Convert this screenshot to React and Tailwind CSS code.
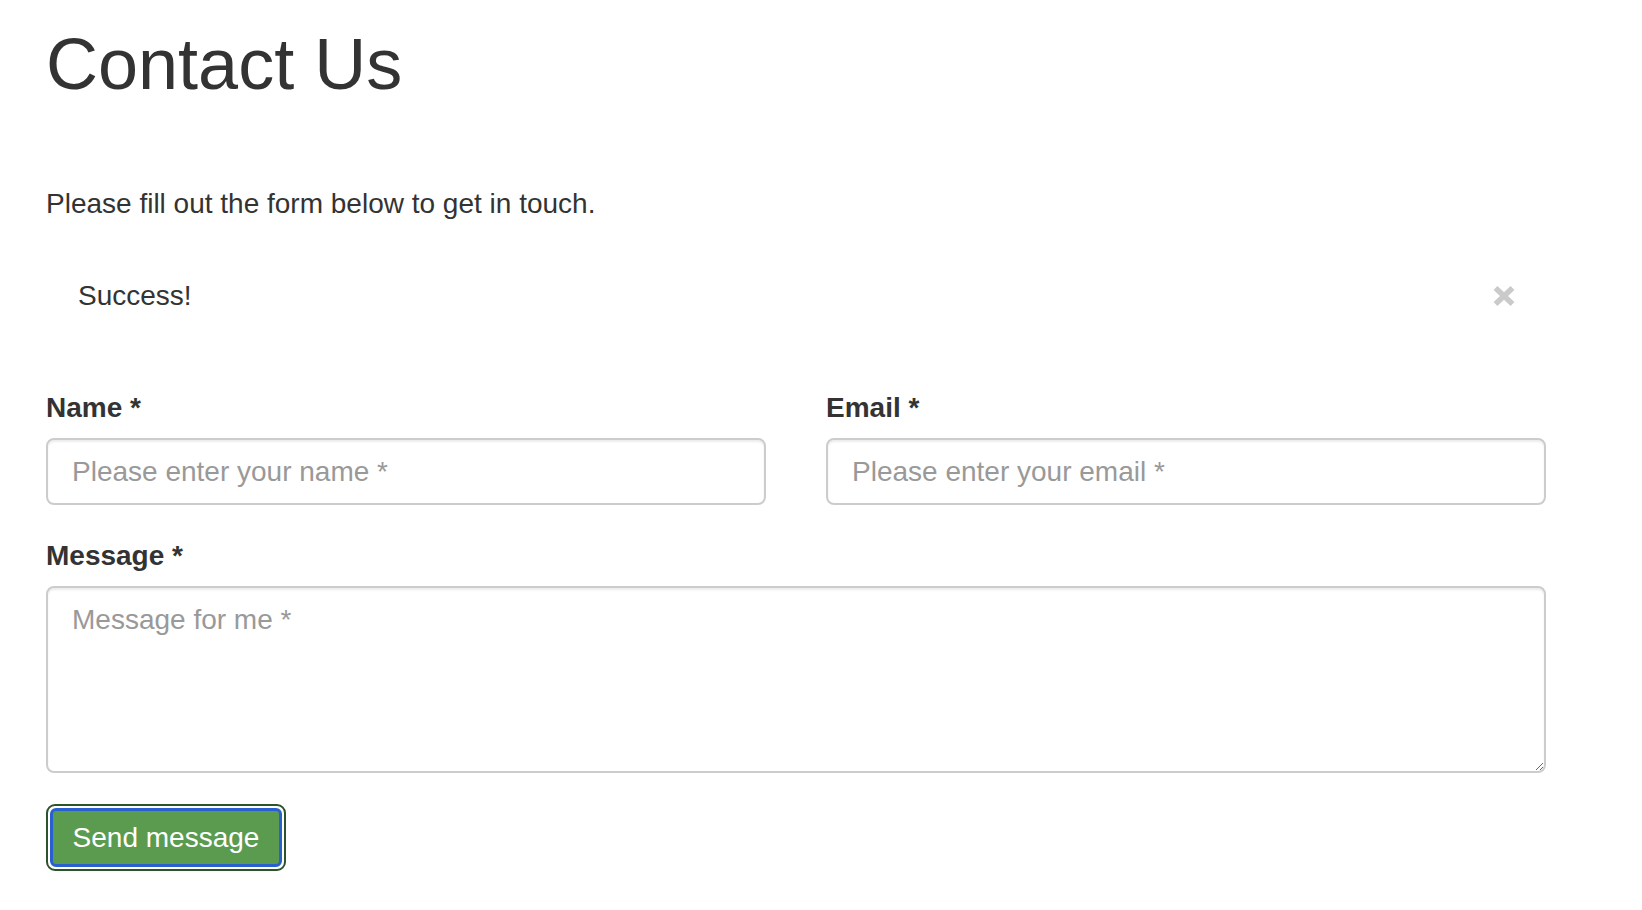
import React from "react";

export default function App() {
  const font = { fontFamily: '"Liberation Sans", Arial, Helvetica, sans-serif' };
  return (
    <div className="min-h-[910px] w-full bg-white text-[#333]" style={font}>
      <div className="w-[1500px] pl-0 ml-[46px]">
        <h1 className="mt-[24px] text-[72px] leading-[80px] font-normal text-[#333]">Contact Us</h1>
        <p className="mt-[80px] text-[28px] leading-[40px]">Please fill out the form below to get in touch.</p>

        <div className="mt-[20px] flex items-center justify-between border-2 border-transparent pl-[30px] pr-[27px] py-[30px]">
          <span className="text-[28px] leading-[40px]">Success!</span>
          <button type="button" className="flex h-[24px] w-[26px] items-center justify-center" aria-label="Close">
            <svg width="24" height="22" viewBox="0 0 24 22">
              <path d="M3.5 3 L20.5 19 M20.5 3 L3.5 19" stroke="#cacaca" strokeWidth="5.5" strokeLinecap="butt" />
            </svg>
          </button>
        </div>

        <form className="mt-[40px]" onSubmit={(e) => e.preventDefault()}>
          <div className="grid grid-cols-2 gap-x-[60px]">
            <div className="flex flex-col">
              <label className="text-[28px] leading-[40px] font-bold">Name *</label>
              <input
                type="text"
                placeholder="Please enter your name *"
                className="mt-[10px] h-[67px] w-full rounded-[8px] border-2 border-[#ccc] bg-white px-[24px] text-[28px] leading-[40px] text-[#555] placeholder:text-[#999] shadow-[inset_0_2px_2px_rgba(0,0,0,0.075)] outline-none"
              />
            </div>
            <div className="flex flex-col">
              <label className="text-[28px] leading-[40px] font-bold">Email *</label>
              <input
                type="email"
                placeholder="Please enter your email *"
                className="mt-[10px] h-[67px] w-full rounded-[8px] border-2 border-[#ccc] bg-white px-[24px] text-[28px] leading-[40px] text-[#555] placeholder:text-[#999] shadow-[inset_0_2px_2px_rgba(0,0,0,0.075)] outline-none"
              />
            </div>
          </div>

          <div className="mt-[31px] flex flex-col">
            <label className="text-[28px] leading-[40px] font-bold">Message *</label>
            <textarea
              placeholder="Message for me *"
              className="mt-[10px] h-[187px] w-full rounded-[8px] border-2 border-[#ccc] bg-white px-[24px] py-[12px] text-[28px] leading-[40px] text-[#555] placeholder:text-[#999] shadow-[inset_0_2px_2px_rgba(0,0,0,0.075)] outline-none"
            />
          </div>

          <div className="mt-[31px]">
            <button
              type="submit"
              className="block h-[67px] w-[240px] rounded-[9px] border-2 border-[#2b542c] bg-white p-[2px]"
            >
              <span className="flex h-full w-full items-center justify-center rounded-[6px] border-[3px] border-[#2a5fcf] bg-[#5b9b50] text-[28px] leading-[40px] text-white">
                Send message
              </span>
            </button>
          </div>
        </form>
      </div>
    </div>
  );
}
